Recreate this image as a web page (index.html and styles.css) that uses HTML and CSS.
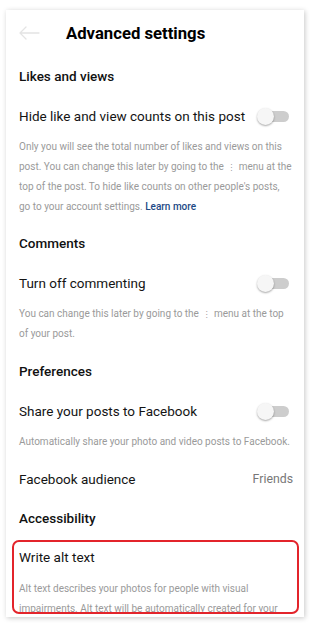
FILE: index.html
```html
<!DOCTYPE html>
<html lang="en">
<head>
<meta charset="utf-8">
<title>Advanced settings</title>
<link rel="stylesheet" href="styles.css">
</head>
<body>
<div class="card">
  <header class="header">
    <svg class="back" width="22" height="14" viewBox="0 0 22 14" aria-hidden="true">
      <path d="M21 7H2M8 1L2 7l6 6" fill="none" stroke="#e4e4e4" stroke-width="1.3" stroke-linecap="round" stroke-linejoin="round"/>
    </svg>
    <h1 class="title">Advanced settings</h1>
  </header>

  <div class="content">
    <div class="section">Likes and views</div>
    <div class="row">
      <span class="label">Hide like and view counts on this post</span>
      <span class="toggle"><span class="thumb"></span></span>
    </div>
    <p class="desc desc-first">Only you will see the total number of likes and views on this post. You can change this later by going to the <span class="dots">⋮</span> menu at the top of the post. To hide like counts on other people's posts, go to your account settings. <a class="link">Learn more</a></p>

    <div class="section">Comments</div>
    <div class="row">
      <span class="label">Turn off commenting</span>
      <span class="toggle"><span class="thumb"></span></span>
    </div>
    <p class="desc">You can change this later by going to the <span class="dots">⋮</span> menu at the top of your post.</p>

    <div class="section">Preferences</div>
    <div class="row">
      <span class="label">Share your posts to Facebook</span>
      <span class="toggle"><span class="thumb"></span></span>
    </div>
    <p class="desc">Automatically share your photo and video posts to Facebook.</p>

    <div class="row">
      <span class="label">Facebook audience</span>
      <span class="value">Friends</span>
    </div>

    <div class="section section-last">Accessibility</div>
    <div class="highlight">
      <div class="row row-alt">
        <span class="label">Write alt text</span>
      </div>
      <p class="desc desc-alt">Alt text describes your photos for people with visual impairments. Alt text will be automatically created for your photos or you can choose to write your own.</p>
    </div>
  </div>
</div>
</body>
</html>
```

FILE: styles.css
```css
html, body {
  margin: 0;
  padding: 0;
  background: #ffffff;
  overflow: hidden;
}

body {
  font-family: Roboto, "Liberation Sans", Arial, sans-serif;
  color: #111111;
  padding: 10px 10px 0 6px;
  height: 627px;
  box-sizing: border-box;
}

.card {
  width: 298px;
  height: 607px;
  background: #ffffff;
  box-shadow: 1px 1px 5px rgba(0, 0, 0, 0.22);
  overflow: hidden;
}

.header {
  height: 46px;
  display: flex;
  align-items: center;
  padding-left: 12px;
}

.back {
  display: block;
  margin-right: 26px;
}

.title {
  margin: 0;
  font-size: 16.7px;
  font-weight: 700;
  color: #000000;
}

.content {
  padding: 0 11px 0 13px;
}

.section {
  height: 40px;
  line-height: 40px;
  font-size: 13.5px;
  font-weight: 500;
  color: #111111;
}

.section-last {
  height: 38px;
  line-height: 38px;
}

.row {
  height: 40px;
  display: flex;
  align-items: center;
  justify-content: space-between;
}

.label {
  font-size: 13.5px;
  color: #141414;
}

.value {
  font-size: 12.3px;
  color: #777777;
}

.toggle {
  position: relative;
  width: 31px;
  height: 11px;
  border-radius: 6px;
  background: #cdcdcd;
  margin-right: 4px;
}

.thumb {
  position: absolute;
  left: -1px;
  top: -3px;
  width: 17px;
  height: 17px;
  border-radius: 50%;
  background: #f6f6f6;
  box-shadow: 0 1px 2px rgba(0, 0, 0, 0.35);
}

.desc {
  margin: 0;
  padding: 1px 0 7px;
  font-size: 10px;
  line-height: 20px;
  color: #9a9a9a;
}

.desc-first {
  padding-bottom: 6px;
}

.dots {
  font-family: "DejaVu Sans", sans-serif;
  font-size: 8px;
  line-height: 0;
  padding: 0 1px;
}

.link {
  color: #1d4a86;
  font-weight: 500;
}

.highlight {
  margin: 3px -6px 0 -7px;
  height: 74px;
  box-sizing: border-box;
  border: 2px solid #e3242b;
  border-radius: 7px;
  padding: 0 4px 0 5px;
  overflow: hidden;
}

.row-alt {
  height: 30px;
}

.desc-alt {
  padding-top: 7px;
}
```
